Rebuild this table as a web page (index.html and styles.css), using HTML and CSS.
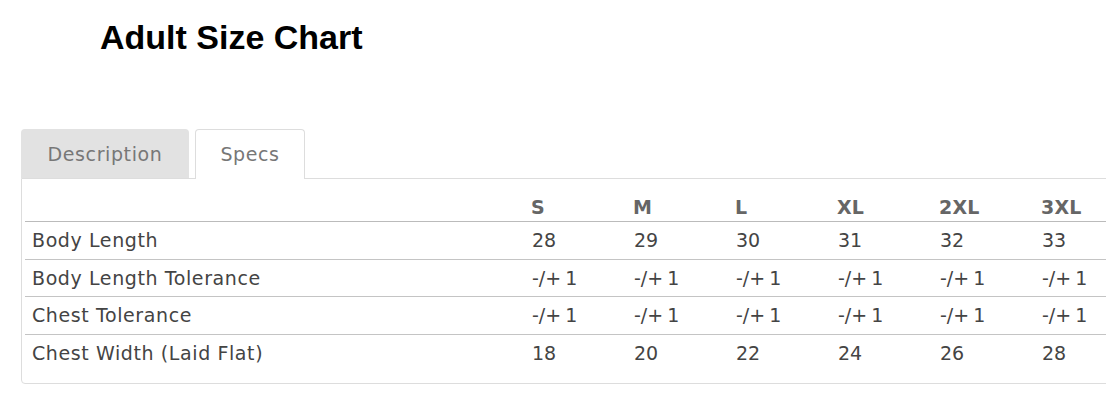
FILE: index.html
```html
<!DOCTYPE html>
<html>
<head>
<meta charset="utf-8">
<link rel="stylesheet" href="styles.css">
</head>
<body>
<div class="page">
  <h1 class="title">Adult Size Chart</h1>
  <div class="tabs">
    <div class="tab tab-inactive">Description</div>
    <div class="tab tab-active">Specs</div>
  </div>
  <div class="panel">
    <table class="specs">
      <colgroup>
        <col class="c-label"><col class="c-size"><col class="c-size"><col class="c-size"><col class="c-size"><col class="c-size"><col class="c-size">
      </colgroup>
      <thead>
        <tr><th></th><th>S</th><th>M</th><th>L</th><th>XL</th><th>2XL</th><th>3XL</th></tr>
      </thead>
      <tbody>
        <tr><td class="label">Body Length</td><td>28</td><td>29</td><td>30</td><td>31</td><td>32</td><td>33</td></tr>
        <tr><td class="label">Body Length Tolerance</td><td>-/+ 1</td><td>-/+ 1</td><td>-/+ 1</td><td>-/+ 1</td><td>-/+ 1</td><td>-/+ 1</td></tr>
        <tr><td class="label">Chest Tolerance</td><td>-/+ 1</td><td>-/+ 1</td><td>-/+ 1</td><td>-/+ 1</td><td>-/+ 1</td><td>-/+ 1</td></tr>
        <tr><td class="label">Chest Width (Laid Flat)</td><td>18</td><td>20</td><td>22</td><td>24</td><td>26</td><td>28</td></tr>
      </tbody>
    </table>
  </div>
</div>
</body>
</html>
```
FILE: styles.css
```css
html, body {
  margin: 0;
  padding: 0;
  background: #fff;
  overflow: hidden;
}
.page {
  width: 1106px;
  height: 415px;
  overflow: hidden;
  font-family: "DejaVu Sans", sans-serif;
}
.title {
  margin: 0;
  padding: 17px 0 0 100px;
  height: 111px;
  box-sizing: border-box;
  font-family: "Liberation Sans", Arial, sans-serif;
  font-weight: bold;
  font-size: 34px;
  line-height: 40px;
  color: #000;
}
.tabs {
  display: flex;
  gap: 6px;
  padding-left: 21px;
  margin-top: 18px;
  position: relative;
  z-index: 1;
}
.tab {
  box-sizing: border-box;
  height: 50px;
  font-size: 19px;
  letter-spacing: 0.6px;
  line-height: 50px;
  text-align: center;
  color: #777;
  border-radius: 4px 4px 0 0;
}
.tab-inactive {
  width: 168px;
  background: #e2e2e2;
  height: 49px;
}
.tab-active {
  width: 110px;
  background: #fff;
  border: 1px solid #ddd;
  border-bottom: none;
  line-height: 48px;
}
.panel {
  margin-left: 21px;
  margin-top: -1px;
  width: 1130px;
  height: 206px;
  box-sizing: border-box;
  border: 1px solid #ddd;
  border-radius: 0 0 0 4px;
  padding: 4px 0 0 3px;
}
.specs {
  border-collapse: collapse;
  table-layout: fixed;
  width: 1112px;
  font-size: 19px;
  color: #444;
}
.c-label { width: 500px; }
.c-size { width: 102px; }
.specs th, .specs td {
  text-align: left;
  padding: 0 7px;
  white-space: nowrap;
}
.specs th {
  height: 28px;
  padding-top: 10px;
  padding-left: 6px;
  font-weight: bold;
  color: #666;
  letter-spacing: 0.2px;
  border-bottom: 1px solid #bbb;
  vertical-align: middle;
}
.specs td {
  height: 36.5px;
  border-bottom: 1px solid #c4c4c4;
  word-spacing: -2px;
}
.specs td.label {
  letter-spacing: 0.6px;
  word-spacing: 0;
}
.specs tbody tr:last-child td {
  border-bottom: none;
}
```
